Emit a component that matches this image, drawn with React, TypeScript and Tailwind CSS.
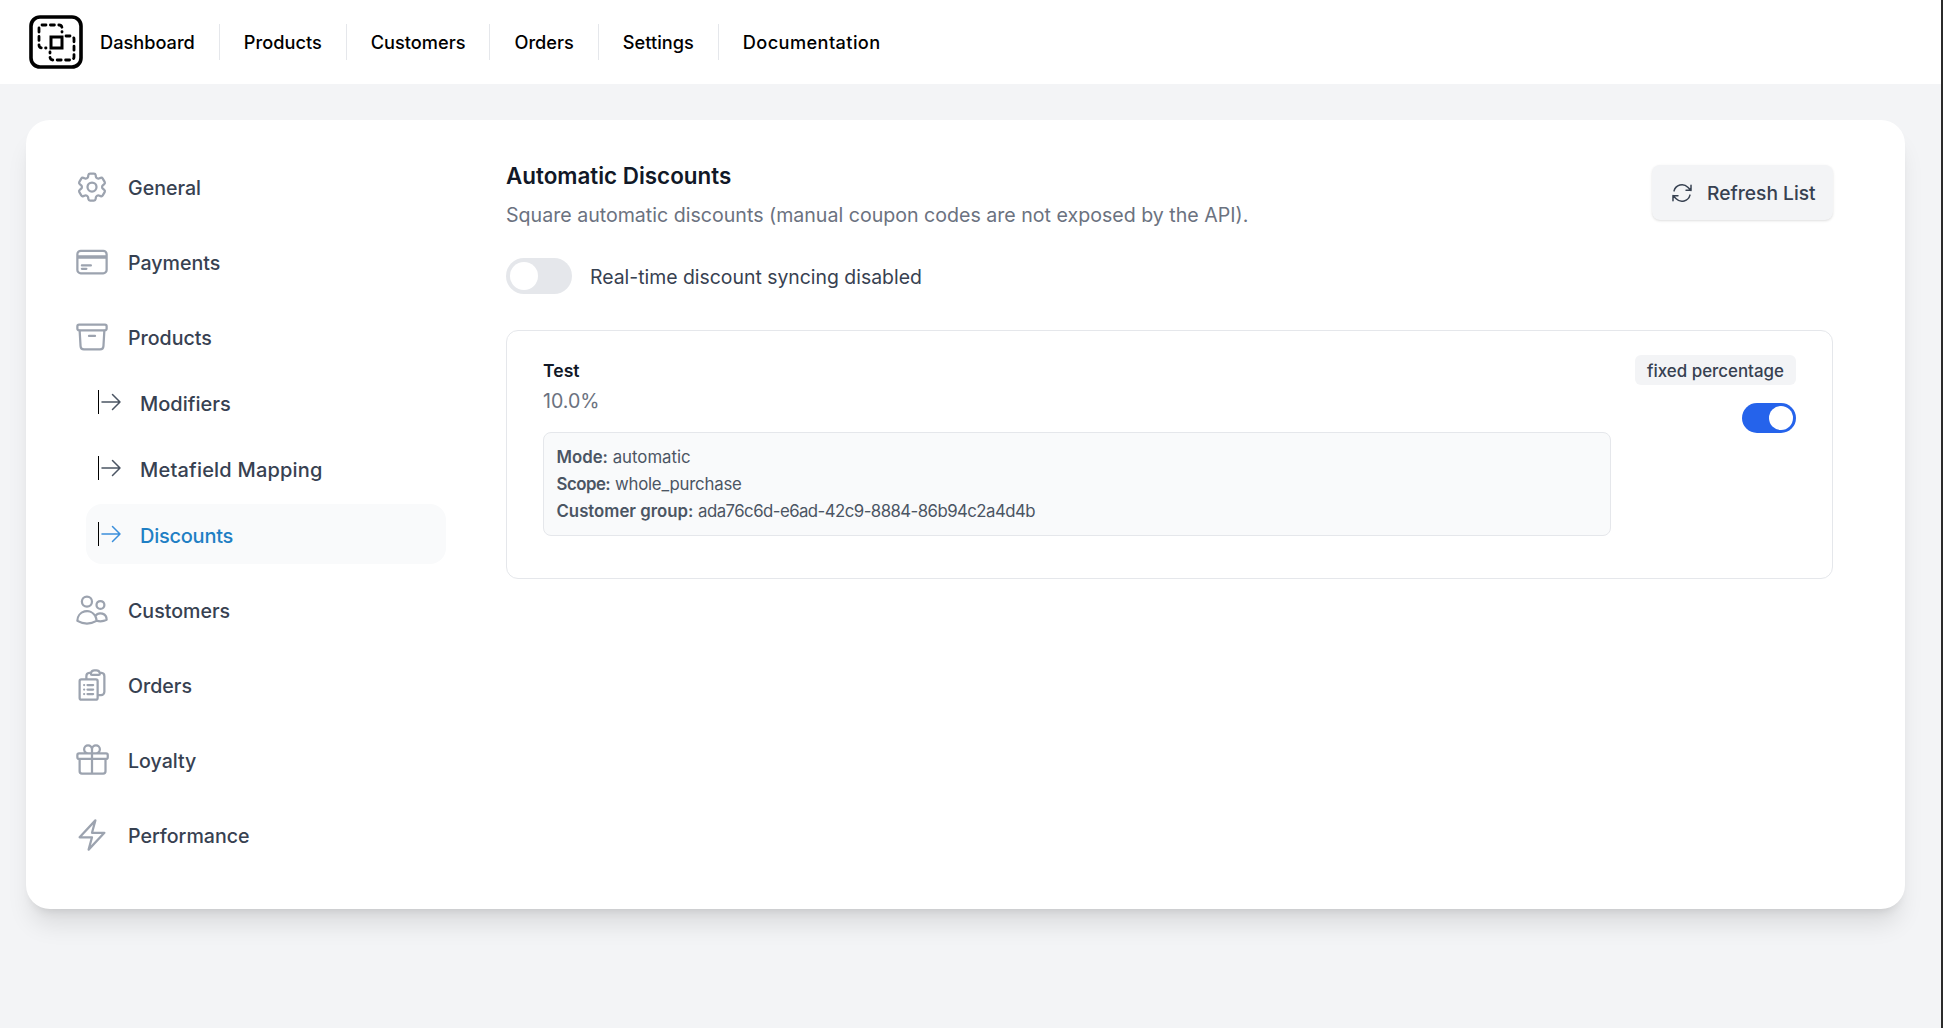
import type { ComponentType, SVGProps } from "react";
import {
  HiOutlineArchiveBox,
  HiOutlineArrowPath,
  HiOutlineArrowRight,
  HiOutlineBolt,
  HiOutlineClipboardDocumentList,
  HiOutlineCog6Tooth,
  HiOutlineCreditCard,
  HiOutlineGift,
  HiOutlineUsers,
} from "react-icons/hi2";

const NAV = ["Dashboard", "Products", "Customers", "Orders", "Settings", "Documentation"];

type Icon = ComponentType<SVGProps<SVGSVGElement>>;

function Logo() {
  return (
    <svg viewBox="0 0 54 54" className="h-[54px] w-[54px] shrink-0" fill="none">
      <rect x="2" y="2" width="50" height="50" rx="9" stroke="#000" strokeWidth="3.6" />
      <path
        d="M13 10h17a3 3 0 0 1 3 3v4M10 13v17a3 3 0 0 0 3 3h4"
        stroke="#000"
        strokeWidth="2.8"
        strokeLinecap="round"
        strokeDasharray="4 4.4"
      />
      <path
        d="M37 21h5a3 3 0 0 1 3 3v18a3 3 0 0 1-3 3H24a3 3 0 0 1-3-3v-5"
        stroke="#000"
        strokeWidth="2.8"
        strokeLinecap="round"
        strokeDasharray="4 4.4"
      />
      <rect x="22" y="22" width="11" height="11" stroke="#000" strokeWidth="3" />
    </svg>
  );
}

function SideItem({ icon: Icon, label }: { icon: Icon; label: string }) {
  return (
    <a className="flex h-[75px] items-center gap-[18px] pl-[8px] text-[19.6px] font-medium text-[#374151]">
      <Icon className="-mt-[2px] h-[36px] w-[36px] shrink-0 text-[#9ca3af]" />
      <span className="pt-[2px]">{label}</span>
    </a>
  );
}

function SubItem({ label, active, className }: { label: string; active?: boolean; className?: string }) {
  return (
    <a
      className={`flex h-[60px] items-center gap-[17px] rounded-[16px] pl-[12px] text-[20px] font-medium ${
        active ? "bg-[#f9fafb] text-[#1f7fc4]" : "text-[#374151]"
      }`}
    >
      {/* the divider sits right against the arrow */}
      <HiOutlineArrowRight
        className={`h-[24px] w-[25px] shrink-0 border-l border-black ${active ? "text-[#3b8fdb]" : "text-[#4b5563]"}`}
      />
      <span className={`pt-[3px] ${className ?? ""}`}>{label}</span>
    </a>
  );
}

export default function App() {
  return (
    <div className="min-h-[1028px] border-r-2 border-[#2b2b2b] bg-[#f3f4f6] font-['Inter',sans-serif]">
      <header className="flex h-[84px] items-center bg-white pl-[29px]">
        <Logo />
        <nav className="ml-[17px] flex items-center">
          {NAV.map((n, i) => (
            <span
              key={n}
              className={`flex h-[36px] items-center px-[24px] pt-[1px] text-[18.2px] font-medium text-black first:pl-0 last:tracking-[0.4px] ${
                i < NAV.length - 1 ? "border-r border-[#e5e7eb]" : ""
              }`}
            >
              {n}
            </span>
          ))}
        </nav>
      </header>

      <div className="pl-[26px] pr-[36px] pt-[36px]">
        <main className="flex h-[789px] rounded-[24px] bg-white pl-[40px] pr-[72px] pt-[30px] shadow-xl">
          <aside className="w-[440px] shrink-0 pr-[60px]">
            <SideItem icon={HiOutlineCog6Tooth} label="General" />
            <SideItem icon={HiOutlineCreditCard} label="Payments" />
            <SideItem icon={HiOutlineArchiveBox} label="Products" />
            <div className="-mt-[3px] mb-[9px] flex flex-col gap-[6px] pl-[20px]">
              <SubItem label="Modifiers" />
              <SubItem label="Metafield Mapping" className="tracking-[0.2px]" />
              <SubItem label="Discounts" active className="tracking-[-0.25px]" />
            </div>
            <SideItem icon={HiOutlineUsers} label="Customers" />
            <SideItem icon={HiOutlineClipboardDocumentList} label="Orders" />
            <SideItem icon={HiOutlineGift} label="Loyalty" />
            <SideItem icon={HiOutlineBolt} label="Performance" />
          </aside>

          <section className="min-w-0 flex-1 pt-[10px]">
            <div className="flex items-start justify-between">
              <div>
                <h2 className="text-[22.4px] font-semibold leading-[32px] text-[#111827]">Automatic Discounts</h2>
                <p className="mt-[9px] text-[19.6px] leading-[28px] text-[#6b7280]">
                  Square automatic discounts (manual coupon codes are not exposed by the API).
                </p>
              </div>
              <button className="mt-[5px] flex h-[55px] w-[181px] items-center gap-[13px] rounded-[8px] bg-[#f3f4f6] pl-[18px] text-[19.2px] font-medium text-[#374151] shadow-sm">
                <HiOutlineArrowPath className="h-[24px] w-[24px]" />
                <span className="pt-[1px]">Refresh List</span>
              </button>
            </div>

            <div className="mt-[29px] flex items-center gap-[18px]">
              <span className="flex h-[36px] w-[66px] items-center rounded-full bg-[#e5e7eb] p-[4px]">
                <span className="h-[28px] w-[28px] rounded-full bg-white" />
              </span>
              <span className="pt-[3px] text-[19.4px] text-[#374151]">Real-time discount syncing disabled</span>
            </div>

            <div className="mt-[36px] flex justify-between rounded-[12px] border border-[#e5e7eb] pb-[42px] pl-[36px] pr-[36px] pt-[24px]">
              <div className="min-w-0 flex-1">
                <div className="mt-[2px] text-[17.6px] font-semibold leading-[28px] text-[#111827]">Test</div>
                <div className="mt-[2px] text-[19.6px] leading-[28px] text-[#6b7280]">10.0%</div>
                <div className="mt-[17px] rounded-[8px] border border-[#e5e7eb] bg-[#f9fafb] px-[12.5px] py-[10px] text-[16.8px] leading-[27px] text-[#4b5563]">
                  <div className="pt-[1px]"><b className="font-semibold">Mode:</b> automatic</div>
                  <div><b className="font-semibold tracking-[-0.5px]">Scope:</b> <span className="tracking-[-0.2px]">whole_purchase</span></div>
                  <div><b className="font-semibold">Customer group:</b> <span className="tracking-[-0.55px]">ada76c6d-e6ad-42c9-8884-86b94c2a4d4b</span></div>
                </div>
              </div>
              <div className="ml-[24px] flex w-[161px] shrink-0 flex-col items-end">
                <span className="w-full whitespace-nowrap rounded-[6px] bg-[#f3f4f6] pb-[2px] pt-[4px] text-center text-[16.9px] font-medium leading-[24px] text-[#374151]">
                  fixed percentage
                </span>
                <span className="mt-[18px] flex h-[30px] w-[54px] items-center justify-end rounded-full bg-[#2563eb] p-[3px]">
                  <span className="h-[24px] w-[24px] rounded-full bg-white" />
                </span>
              </div>
            </div>
          </section>
        </main>
      </div>
    </div>
  );
}
